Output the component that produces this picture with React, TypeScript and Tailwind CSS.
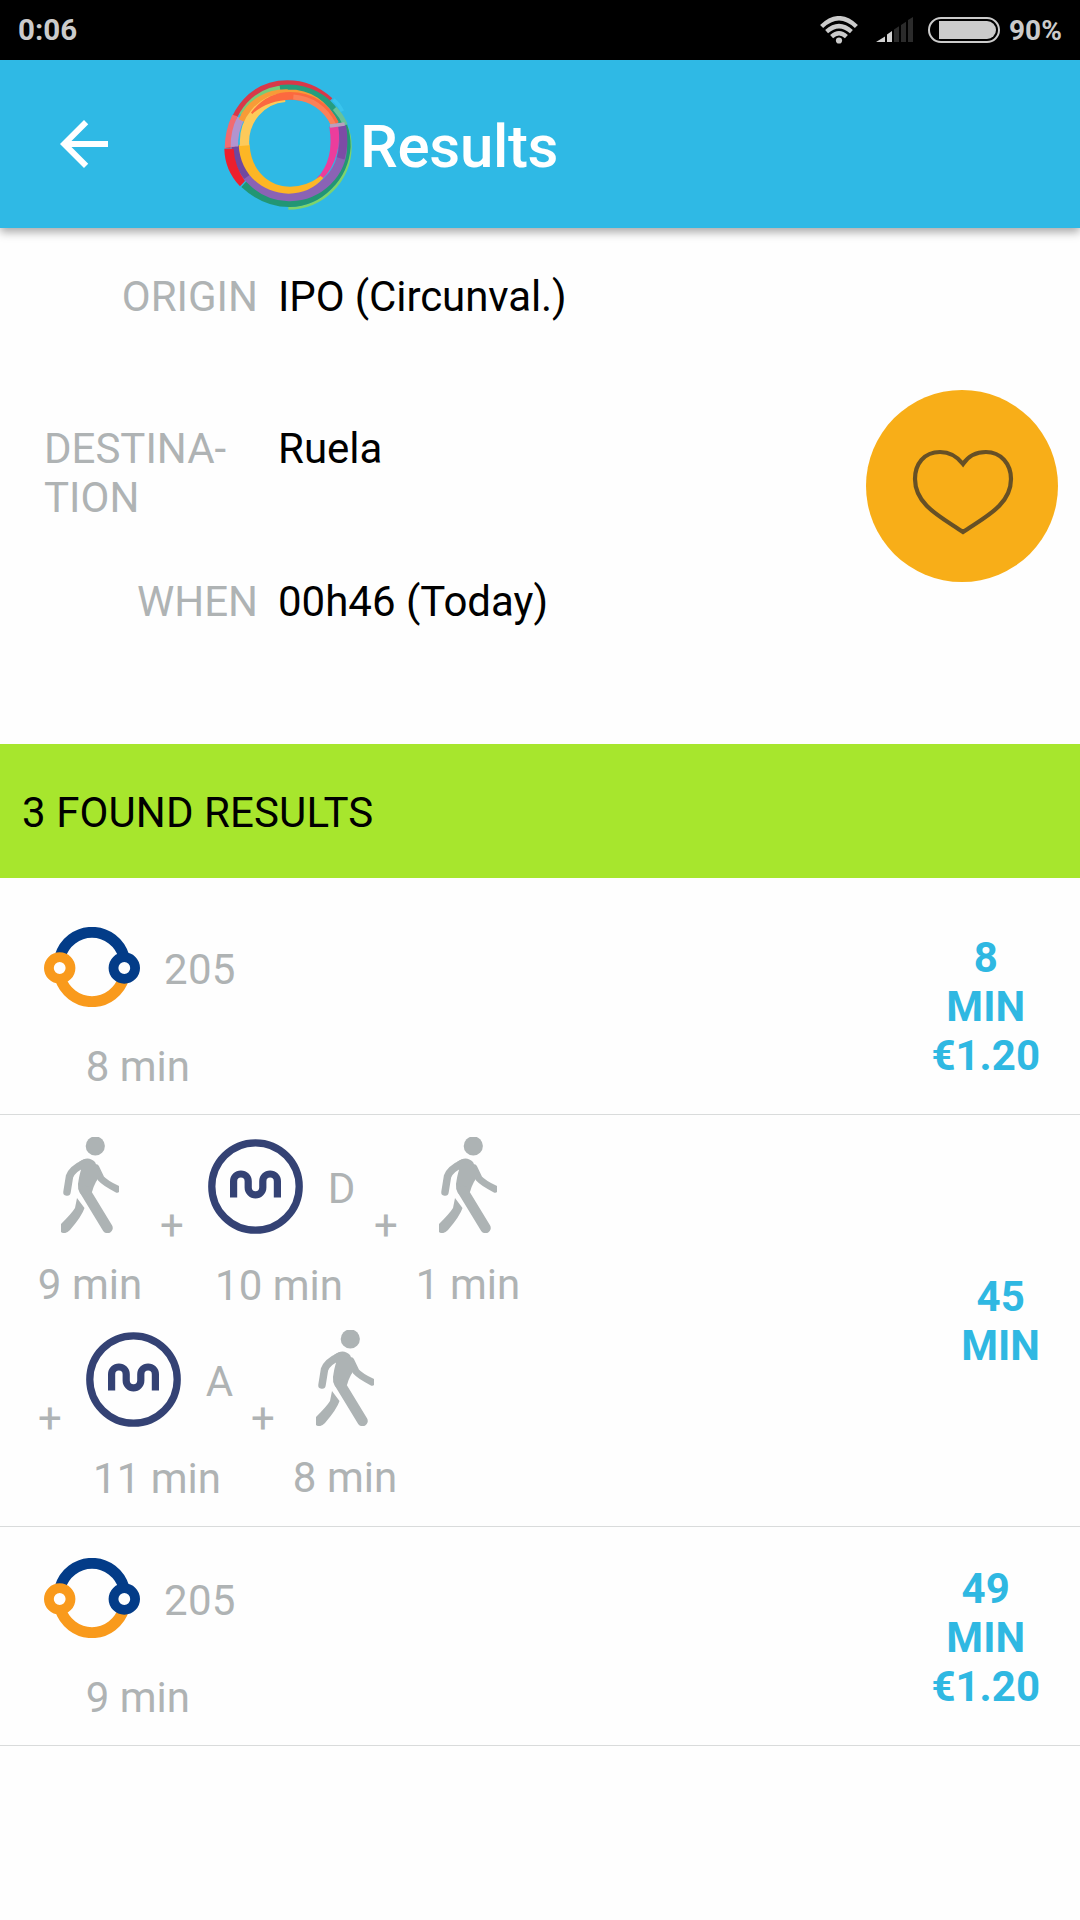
import type { ReactNode } from "react";

function StatusBar() {
  return (
    <div className="flex h-[60px] items-center bg-black pl-[18px] pr-[18px] font-bold text-[#cbcbcb]">
      <span className="text-[29.5px] leading-[60px]">0:06</span>
      <svg className="ml-auto" width="38" height="28" viewBox="0 0 38 28" fill="none" stroke="#cbcbcb" strokeWidth="4.4">
        <path d="M1.6 10.5Q19-6 36.4 10.5" />
        <path d="M6.6 15.6Q19 4.600 31.400 15.600" />
        <path d="M11.600 20.600Q19 13.800 26.400 20.600" />
        <circle cx="19" cy="24.500" r="3.100" fill="#cbcbcb" stroke="none" />
      </svg>
      <svg className="ml-[18px]" width="38" height="26" viewBox="0 0 38 26">
        <path d="M0 25 L9 19.500V25Z M11 17.500L16 14V25H11Z" fill="#d2d2d2" />
        <path d="M18 12.500L23 9.300V25H18Z M25 8L30 4.700V25H25Z M32 3L37 0V25H32Z" fill="#2b2b2b" />
      </svg>
      <div className="ml-[14px] h-[26px] w-[72px] rounded-full border-2 border-[#cbcbcb] py-[2px] pl-[9px] pr-[2px]">
        <div className="h-full rounded-r-full bg-[#cbcbcb]" />
      </div>
      <span className="ml-[9px] w-[53px] pt-px text-[28px] leading-[60px]">90%</span>
    </div>
  );
}

function RingLogo() {
  return (
    <svg width="136" height="136" viewBox="660 228 408 408" fill="none">
      <path d="M865 625A186 186 0 0 0 1051 440Q1051 400 1036 374" stroke="#7ed36b" strokeWidth="8" />
      <path d="M732 552Q795 610 870 609C960 608 1034 530 1040 440Q1040 405 1030 378" stroke="#229674" strokeWidth="24" />
      <path d="M707 438C710 520 785 592 870 590C958 588 1028 520 1028 435Q1028 400 1023 378" stroke="#8a63b5" strokeWidth="27" />
      <path d="M707 438Q712 490 742 530" stroke="#70489f" strokeWidth="24" />
      <path d="M1026 378Q1036 430 1022 475" stroke="#7c4ba5" strokeWidth="24" />
      <path d="M988 380L1014 376Q1022 420 1010 462Q998 508 966 538L950 535Q1004 480 988 380Z" fill="#ec3d9c" />
      <path d="M716 434H749C752 508 804 560 870 560Q920 560 962 528L970 534Q930 580 866 581C784 580 720 520 716 434Z" fill="#fdb625" />
      <path d="M673 446H701Q704 500 735 543L720 559Q674 510 673 446Z" fill="#ed1f2d" />
      <path d="M724 345Q765 268 858 262" stroke="#77cb79" strokeWidth="16" />
      <path d="M684 445C686 330 760 248 862 248C915 248 955 266 992 300" stroke="#d83848" strokeWidth="15" />
      <path d="M674 444Q675 390 697 344L712 349Q698 390 704 440Z" fill="#f16b70" />
      <path d="M703 440Q702 395 722 355" stroke="#b294cf" strokeWidth="22" />
      <path d="M840 264Q900 256 950 284Q1003 312 1028 375" stroke="#269d7d" strokeWidth="18" />
      <path d="M1004 325Q1025 348 1036 374" stroke="#67c29a" strokeWidth="14" />
      <path d="M1000 299Q1017 312 1027 334" stroke="#39c4ed" strokeWidth="11" />
      <path d="M725 362C750 305 805 276 863 278C930 278 976 312 1000 367" stroke="#f89b37" strokeWidth="20" />
      <path d="M734 437C728 360 785 297 855 292" stroke="#fdca5a" strokeWidth="28" />
      <path d="M753 338Q800 276 870 276Q970 278 1016 366L998 382Q975 302 875 299Q800 301 757 342Z" fill="#fc693f" />
      <path d="M880 291Q962 298 1001 374" stroke="#fb8158" strokeWidth="15" />
      <path d="M990 378L1034 372" stroke="#b9a0bd" strokeWidth="10" />
    </svg>
  );
}

function Header() {
  return (
    <header className="relative z-10 flex h-[168px] items-center bg-[#2fb9e5] pl-[48px] shadow-[0_4px_9px_rgba(0,0,0,0.35)]">
      <svg width="72" height="72" viewBox="0 0 24 24" fill="#fff">
        <path d="M20 11H7.830l5.590-5.590L12 4l-8 8 8 8 1.410-1.410L7.830 13H20v-2z" />
      </svg>
      <div className="ml-[100px]">
        <RingLogo />
      </div>
      <h1 className="ml-[4px] pt-[5px] text-[60px] font-medium leading-[70px] tracking-[-0.3px] text-white">Results</h1>
    </header>
  );
}

function Details() {
  return (
    <section className="flex h-[516px] pl-[44px] pr-[22px] pt-[44px]">
      <dl className="grid grid-cols-[214px_auto] grid-rows-[152px_153px_153px] gap-x-[20px]">
        <dt className="text-right text-[#afb3b4]">ORIGIN</dt>
        <dd className="tracking-[-0.1px]">IPO (Circunval.)</dd>
        <dt className="text-left text-[#afb3b4]">
          DESTINA-
          <br />
          TION
        </dt>
        <dd>Ruela</dd>
        <dt className="text-right text-[#afb3b4]">WHEN</dt>
        <dd>00h46 (Today)</dd>
      </dl>
      <button className="ml-auto mt-[118px] flex h-[192px] w-[192px] items-center justify-center rounded-full bg-[#f8ae18] pl-[2px] pt-[11px]">
        <svg width="102" height="86" viewBox="0 0 102 86" fill="none" stroke="#665026" strokeWidth="4.2">
          <path d="M51 15C44 6 36 3 28 3C12 3 3 15 3 30C3 56 29 68 51 83C73 68 99 56 99 30C99 15 89 3 74 3C66 3 57 6 51 15Z" />
        </svg>
      </button>
    </section>
  );
}

function BusIcon() {
  return (
    <svg width="96" height="80" viewBox="0 0 96 80" fill="none">
      <path d="M15.900 50A33.500 34.500 0 0 0 80.100 50" stroke="#f99a1c" strokeWidth="11" />
      <path d="M15.900 30A33.500 34.500 0 0 1 80.100 30" stroke="#033c88" strokeWidth="11" />
      <circle cx="15.700" cy="41" r="10.800" fill="#fefefe" stroke="#f99a1c" strokeWidth="9.800" />
      <circle cx="80.300" cy="41" r="10.800" fill="#fefefe" stroke="#033c88" strokeWidth="9.800" />
    </svg>
  );
}

function MetroIcon() {
  return (
    <svg width="95" height="95" viewBox="0 0 95 95" fill="none" stroke="#344274">
      <circle cx="47.500" cy="47.500" r="43.700" strokeWidth="7.300" />
      <path d="M25.600 58.500V42.300a7.300 7.300 0 0 1 14.600 0V48.500a7.300 7.300 0 0 0 14.600 0V42.300a7.300 7.300 0 0 1 14.600 0V58.500" strokeWidth="7.2" />
    </svg>
  );
}

function WalkIcon() {
  return (
    <svg width="58" height="96" viewBox="0 0 58 96" fill="none" stroke="#adb3b4" strokeLinecap="round" strokeLinejoin="round">
      <circle cx="34.300" cy="9" r="9.600" fill="#adb3b4" stroke="none" />
      <path d="M24 26Q11 32 8.500 39.500L6 55" strokeWidth="7.500" />
      <path d="M35 31L40 41.500Q44 46 56 52" strokeWidth="7" />
      <path d="M18 25Q27 18 34 25L40 38Q34 44 31 55L26 60Q16 58 17 47Q18.500 37 20 33Z" fill="#adb3b4" stroke="none" />
      <path d="M24 54L46.500 91" strokeWidth="10.500" />
      <path d="M16 61L23.500 71Q21 79 9 93Q4 98 0 95L0 87Q11 76 14 71Z" fill="#adb3b4" stroke="none" />
    </svg>
  );
}

function Leg({ icon, time, className }: { icon: ReactNode; time: string; className: string }) {
  return (
    <div className={`flex shrink-0 flex-col items-center whitespace-nowrap text-[#afb3b4] ${className}`}>
      <div className="flex h-[96px] items-center">{icon}</div>
      <span>{time}</span>
    </div>
  );
}

function MetroLeg({ line, time }: { line: string; time: string }) {
  return (
    <div className="ml-[22px] flex w-[148px] shrink-0 flex-col items-center gap-[27px] whitespace-nowrap text-[#afb3b4]">
      <div className="flex h-[97px] items-center pl-[3px] pt-px">
        <MetroIcon />
        <span className="pl-[25px] pt-[4px]">{line}</span>
      </div>
      <span className="pr-[2px]">{time}</span>
    </div>
  );
}

function Plus({ className }: { className: string }) {
  return <span className={`w-[24px] shrink-0 pt-[64px] text-[#afb3b4] ${className}`}>+</span>;
}

function Cost({ children, className }: { children: ReactNode; className: string }) {
  return <div className={`ml-auto text-center font-bold text-[#2fb8e2] ${className}`}>{children}</div>;
}

function BusResult({ time, total, className }: { time: string; total: string; className: string }) {
  return (
    <article className={`flex items-start border-b border-[#d9dbdb] pl-[44px] pr-[40px] ${className}`}>
      <div className="flex flex-col items-center gap-[27px] pt-[14px] text-[#afb3b4]">
        <div className="flex h-[96px] items-center">
          <BusIcon />
          <span className="pl-[24px] pt-[4px] tracking-[0.3px]">205</span>
        </div>
        <span className="pr-[4px]">{time}</span>
      </div>
      <Cost className="pt-[28px]">
        {total}
        <br />
        MIN
        <br />
        €1.20
      </Cost>
    </article>
  );
}

export default function App() {
  return (
    <main className="h-[1920px] w-[1080px] overflow-hidden bg-[#fefefe] text-[42px] leading-[49px] text-black [font-family:Roboto,sans-serif]">
      <StatusBar />
      <Header />
      <Details />
      <h2 className="flex h-[134px] items-center bg-[#a7e62d] pl-[22px] pt-[2px] tracking-[0.1px]">3 FOUND RESULTS</h2>
      <BusResult className="h-[237px] pt-[27px]" time="8 min" total="8" />
      <article className="flex h-[412px] border-b border-[#d9dbdb] pl-[37px] pr-[40px]">
        <div className="pt-[22px]">
          <div className="flex h-[193px]">
            <Leg className="w-[106px] gap-[27px]" icon={<WalkIcon />} time="9 min" />
            <Plus className="ml-[17px]" />
            <MetroLeg line="D" time="10 min" />
            <Plus className="ml-[20px]" />
            <Leg className="ml-[17px] w-[106px] gap-[27px]" icon={<WalkIcon />} time="1 min" />
          </div>
          <div className="flex h-[193px] pl-px">
            <Plus className="" />
            <MetroLeg line="A" time="11 min" />
            <Plus className="ml-[19px]" />
            <Leg className="ml-[17px] w-[106px] gap-[27px]" icon={<WalkIcon />} time="8 min" />
          </div>
        </div>
        <Cost className="pt-[157px]">
          45
          <br />
          MIN
        </Cost>
      </article>
      <BusResult className="h-[219px] pt-[9px]" time="9 min" total="49" />
    </main>
  );
}
